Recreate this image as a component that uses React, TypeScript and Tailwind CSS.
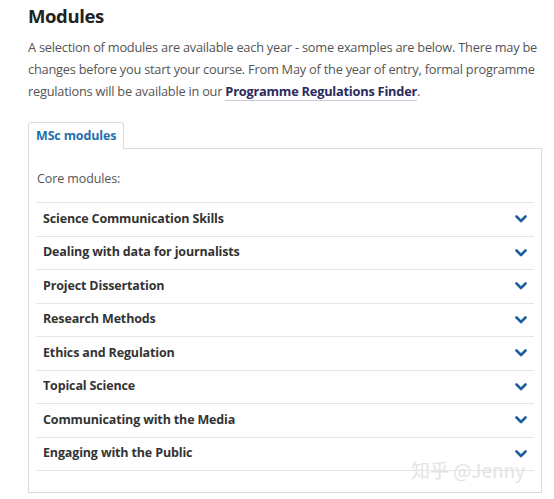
import React from "react";

const modules = [
  "Science Communication Skills",
  "Dealing with data for journalists",
  "Project Dissertation",
  "Research Methods",
  "Ethics and Regulation",
  "Topical Science",
  "Communicating with the Media",
  "Engaging with the Public",
];

function Chevron() {
  return (
    <svg width="12" height="8" viewBox="0 0 12 8" className="shrink-0">
      <path d="M1.5 1.5 L6 6 L10.5 1.5" fill="none" stroke="#1d5f9e" strokeWidth="2.6" strokeLinecap="round" strokeLinejoin="round" />
    </svg>
  );
}

export default function App() {
  return (
    <div className="relative w-[554px] h-[499px] bg-white overflow-hidden" style={{ fontFamily: '"Open Sans", "Noto Sans", sans-serif' }}>
      <div className="pl-[28px] pr-[8px] pt-[2px]">
        <h2 className="text-[18.5px] tracking-[-0.4px] font-bold text-[#222] leading-[28px]">Modules</h2>
        <p className="mt-[6px] w-[518px] text-[12.8px] tracking-[-0.23px] leading-[22px] text-[#555]">
          A selection of modules are available each year - some examples are below. There may be changes before you start your course. From May of the year of entry, formal programme regulations will be available in our{" "}
          <a className="font-bold text-[#2a2a5c] border-b border-[#c8c8d8]">Programme Regulations Finder</a>.
        </p>
        <div className="mt-[20px] w-[514px]">
          <div className="flex">
            <div className="h-[27px] w-[96px] border border-b-0 border-[#dcdcdc] rounded-t-[3px] bg-white relative z-10 -mb-px flex items-center pl-[7px] text-[12.5px] tracking-[-0.15px] font-bold text-[#1f6fad]">
              MSc modules
            </div>
          </div>
          <div className="border border-[#dcdcdc] h-[345px] px-[7px] pt-[21px]">
            <div className="text-[12.5px] tracking-[-0.1px] text-[#555] leading-[18px] pl-px">Core modules:</div>
            <div className="mt-[14px] border-t border-[#e6e6e6]">
              {modules.map((m) => (
                <div key={m} className="h-[33.5px] border-b border-[#e6e6e6] flex items-center justify-between pl-[7px] pr-[7px]">
                  <span className="text-[12.5px] tracking-[-0.15px] font-bold text-[#333]">{m}</span>
                  <Chevron />
                </div>
              ))}
            </div>
          </div>
        </div>
      </div>
      <div className="absolute left-[411px] top-[458px] text-[19px] text-[#e4e4e4] leading-[24px]" style={{ fontFamily: '"Noto Sans CJK SC", "Noto Sans", sans-serif' }}>
        知乎 @Jenny
      </div>
    </div>
  );
}
